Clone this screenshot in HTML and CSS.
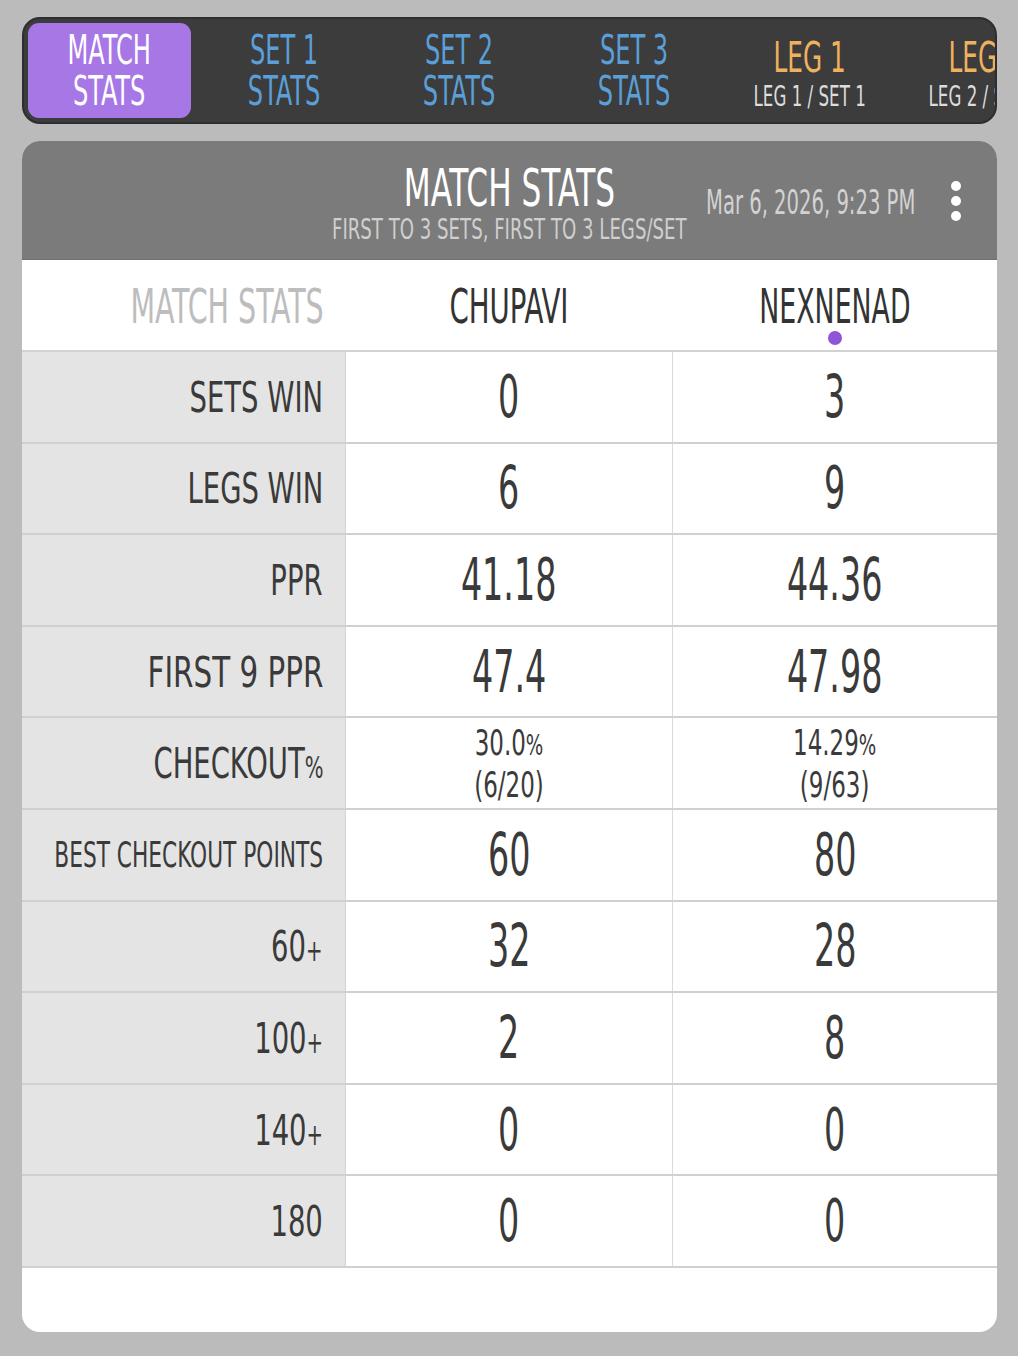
FILE: index.html
```html
<!DOCTYPE html>
<html lang="en">
<head>
<meta charset="utf-8">
<title>Match Stats</title>
<link rel="stylesheet" href="styles.css">
</head>
<body>
<div class="page">
  <nav class="tabs">
    <div class="tab active"><span class="sq">MATCH<br>STATS</span></div>
    <div class="tab set"><span class="sq">SET 1<br>STATS</span></div>
    <div class="tab set"><span class="sq">SET 2<br>STATS</span></div>
    <div class="tab set"><span class="sq">SET 3<br>STATS</span></div>
    <div class="tab leg"><span class="sq"><span class="leg-title">LEG 1</span><span class="leg-sub">LEG 1 / SET 1</span></span></div>
    <div class="tab leg"><span class="sq"><span class="leg-title">LEG 2</span><span class="leg-sub">LEG 2 / SET 1</span></span></div>
  </nav>

  <section class="card">
    <header class="card-head">
      <div class="titles">
        <span class="sq title">MATCH STATS</span>
        <span class="sq subtitle">FIRST TO 3 SETS, FIRST TO 3 LEGS/SET</span>
      </div>
      <span class="sq date">Mar 6, 2026, 9:23 PM</span>
      <button class="kebab" aria-label="More options"><i></i><i></i><i></i></button>
    </header>

    <div class="table">
      <div class="hrow">
        <div class="hcell label-h"><span class="sq r">MATCH STATS</span></div>
        <div class="hcell"><span class="sq">CHUPAVI</span></div>
        <div class="hcell"><span class="sq">NEXNENAD</span><span class="turn-dot"></span></div>
      </div>

      <div class="row"><div class="label"><span class="sq r">SETS WIN</span></div><div class="val"><span class="sq">0</span></div><div class="val"><span class="sq">3</span></div></div>
      <div class="row"><div class="label"><span class="sq r">LEGS WIN</span></div><div class="val"><span class="sq">6</span></div><div class="val"><span class="sq">9</span></div></div>
      <div class="row"><div class="label"><span class="sq r">PPR</span></div><div class="val"><span class="sq">41.18</span></div><div class="val"><span class="sq">44.36</span></div></div>
      <div class="row"><div class="label"><span class="sq r wide">FIRST 9 PPR</span></div><div class="val"><span class="sq">47.4</span></div><div class="val"><span class="sq">47.98</span></div></div>
      <div class="row"><div class="label"><span class="sq r">CHECKOUT<small>%</small></span></div><div class="val small"><span class="sq">30.0<small>%</small><br>(6/20)</span></div><div class="val small"><span class="sq">14.29<small>%</small><br>(9/63)</span></div></div>
      <div class="row"><div class="label"><span class="sq r long">BEST CHECKOUT POINTS</span></div><div class="val"><span class="sq">60</span></div><div class="val"><span class="sq">80</span></div></div>
      <div class="row"><div class="label"><span class="sq r">60<small>+</small></span></div><div class="val"><span class="sq">32</span></div><div class="val"><span class="sq">28</span></div></div>
      <div class="row"><div class="label"><span class="sq r">100<small>+</small></span></div><div class="val"><span class="sq">2</span></div><div class="val"><span class="sq">8</span></div></div>
      <div class="row"><div class="label"><span class="sq r">140<small>+</small></span></div><div class="val"><span class="sq">0</span></div><div class="val"><span class="sq">0</span></div></div>
      <div class="row"><div class="label"><span class="sq r">180</span></div><div class="val"><span class="sq">0</span></div><div class="val"><span class="sq">0</span></div></div>
    </div>
  </section>
</div>
</body>
</html>
```

FILE: styles.css
```css
* { box-sizing: border-box; }

html, body {
  margin: 0;
  background: #bbbbbb;
}

body {
  font-family: "DejaVu Sans Condensed", "Liberation Sans Narrow", "Liberation Sans", sans-serif;
  color: #3a3a3a;
  overflow: hidden;
}

.page {
  width: 1018px;
  padding: 17px 21px 0 22px;
}

/* condensed text: the condensed face squeezed further horizontally */
.sq {
  --sx: 0.67;
  display: inline-block;
  transform: scaleX(var(--sx));
  transform-origin: center;
  white-space: nowrap;
}
.sq.r { transform-origin: right center; }

/* ---------- tab strip ---------- */
.tabs {
  display: flex;
  height: 107px;
  background: #3c3c3c;
  border: 2px solid #2e2e2e;
  border-radius: 18px;
  padding: 4px;
  overflow: hidden;
}

.tab {
  flex: 0 0 175px;
  display: flex;
  align-items: center;
  justify-content: center;
  text-align: center;
  font-size: 40px;
  line-height: 41px;
}

.tab.active {
  flex-basis: 163px;
  margin-right: 6px;
  background: #a877e6;
  color: #ffffff;
  border-radius: 11px;
}

.tab.set { color: #5a9fd8; }

.tab.leg .sq {
  --sx: 0.64;
  display: inline-flex;
  flex-direction: column;
  align-items: center;
  padding-top: 4px;
}
.leg-title { color: #f0b15e; font-size: 43px; line-height: 46px; }
.leg-sub { color: #dcdcdc; font-size: 29px; line-height: 32px; }

/* ---------- card ---------- */
.card {
  margin-top: 17px;
  width: 975px;
  height: 1191px;
  background: #ffffff;
  border-radius: 18px;
  overflow: hidden;
}

.card-head {
  position: relative;
  height: 119px;
  background: #7b7b7b;
  border-bottom: 1px solid #6f6f6f;
  display: flex;
  justify-content: center;
}

.titles {
  display: flex;
  flex-direction: column;
  align-items: center;
  padding-top: 21px;
}

.title {
  --sx: 0.68;
  color: #ffffff;
  font-size: 51px;
  line-height: 53px;
}

.subtitle {
  --sx: 0.72;
  color: #cfcfcf;
  font-size: 28px;
  line-height: 30px;
}

.date {
  --sx: 0.66;
  position: absolute;
  left: 684px;
  top: 42px;
  color: #d2d2d2;
  font-size: 33px;
  transform-origin: left center;
}

.kebab {
  position: absolute;
  left: 926px;
  top: 40px;
  width: 16px;
  height: 40px;
  padding: 0;
  border: 0;
  background: none;
  display: flex;
  flex-direction: column;
  justify-content: space-between;
  align-items: center;
}
.kebab i {
  display: block;
  width: 10px;
  height: 10px;
  border-radius: 50%;
  background: #ffffff;
}

/* ---------- stats table ---------- */
.table { display: flex; flex-direction: column; }

.hrow, .row {
  display: grid;
  grid-template-columns: 324px 326px 325px;
}

.hrow {
  height: 92px;
  border-bottom: 2px solid #d2d2d2;
}

.hcell {
  position: relative;
  display: flex;
  align-items: center;
  justify-content: center;
  font-size: 48px;
  color: #333333;
  padding-top: 2px;
}
.hcell .sq { --sx: 0.62; }
.hcell:nth-child(2) .sq { --sx: 0.64; }
.hcell.label-h {
  justify-content: flex-end;
  padding-right: 22px;
  color: #bdbdbd;
}
.hcell.label-h .sq { --sx: 0.66; }

.turn-dot {
  position: absolute;
  left: 50%;
  bottom: 5px;
  width: 14px;
  height: 14px;
  margin-left: -7px;
  border-radius: 50%;
  background: #8e56d6;
}

.row {
  height: 91.6px;
  border-bottom: 2px solid #d0d0d0;
}

.label {
  background: #e4e4e4;
  border-right: 1px solid #d4d4d4;
  display: flex;
  align-items: center;
  justify-content: flex-end;
  padding-right: 22px;
  font-size: 43px;
  color: #3a3a3a;
}
.label .sq { --sx: 0.71; }
.label .sq.wide { --sx: 0.76; }
.label .sq.long { --sx: 0.67; font-size: 36px; }
.label small { font-size: 0.72em; }

.val {
  display: flex;
  align-items: center;
  justify-content: center;
  font-size: 58px;
  color: #3a3a3a;
}
.val .sq { --sx: 0.64; }
.val + .val { border-left: 1px solid #dadada; }

.val.small {
  font-size: 36px;
  line-height: 39px;
  text-align: center;
}
.val.small .sq { --sx: 0.71; }
.val.small small { font-size: 0.8em; }
```
